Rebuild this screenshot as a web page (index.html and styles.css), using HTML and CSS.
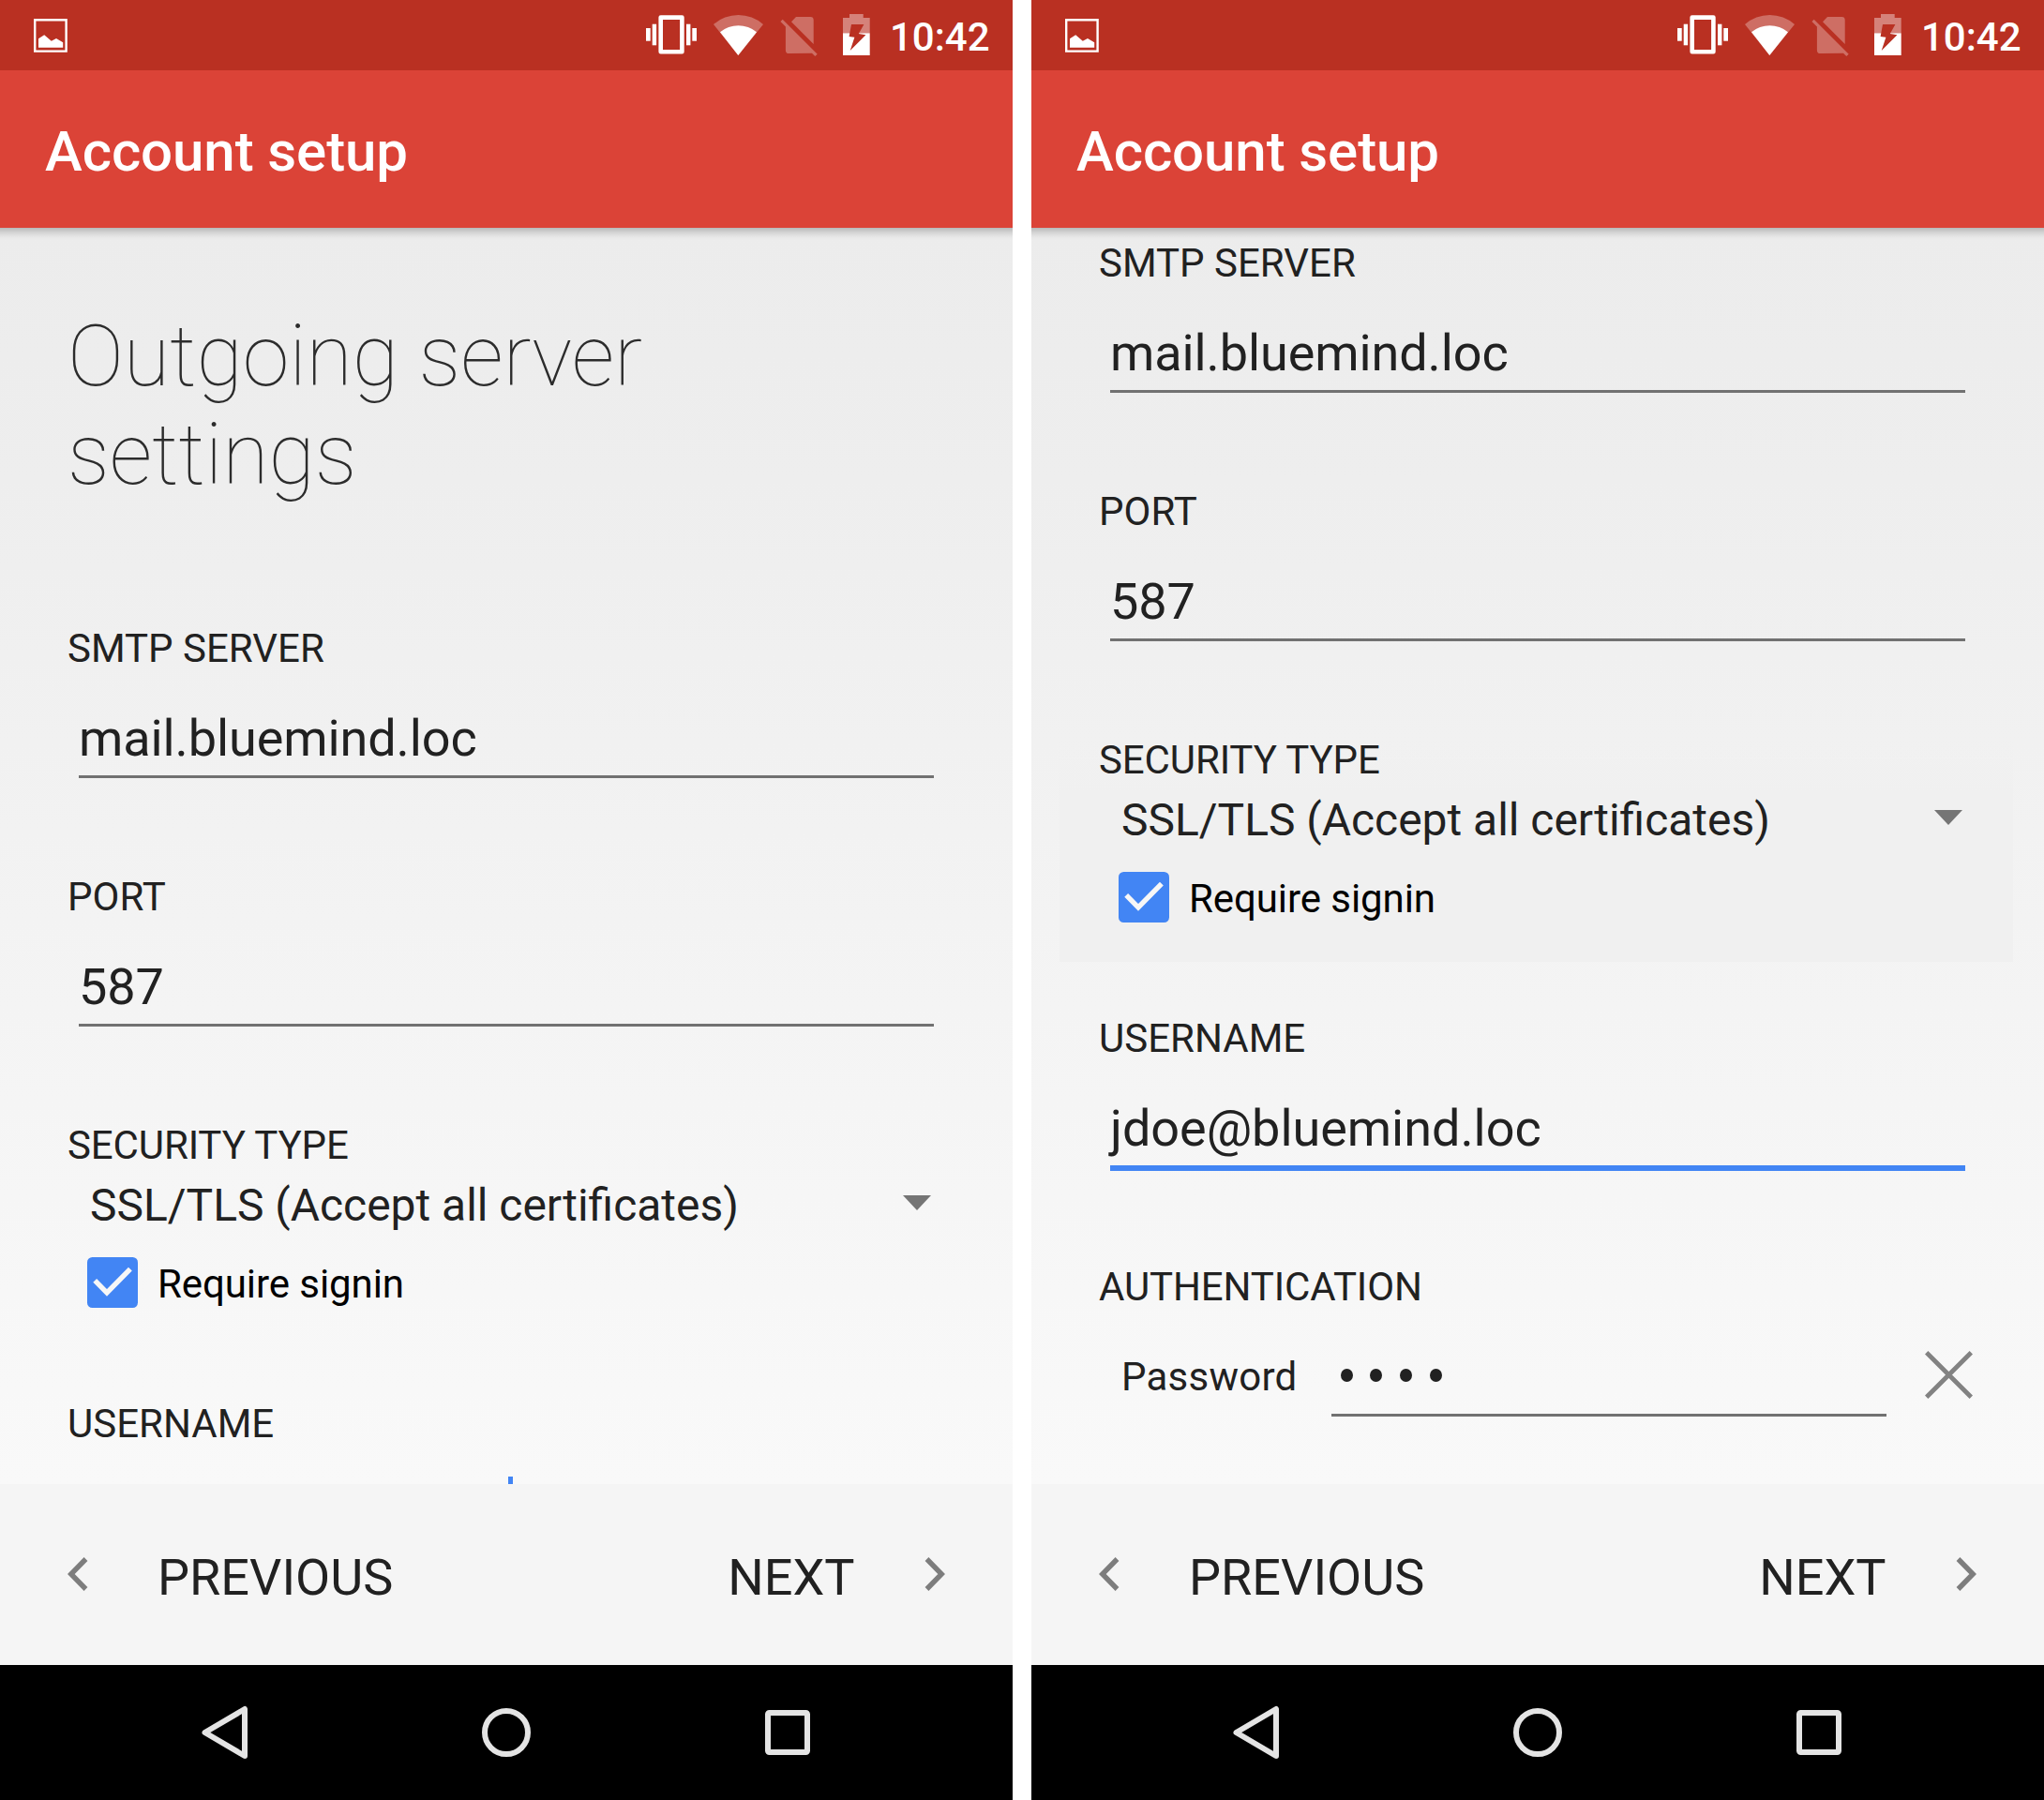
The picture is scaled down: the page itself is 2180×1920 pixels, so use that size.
FILE: index.html
```html
<!DOCTYPE html>
<html lang="en">
<head>
<meta charset="utf-8">
<title>Account setup</title>
<link rel="stylesheet" href="styles.css">
</head>
<body>
<svg class="defs" width="0" height="0" aria-hidden="true">
  <symbol id="i-status" viewBox="689 0 242 75">
    <g fill="#fff">
      <rect x="689" y="30" width="4.7" height="13.7"/>
      <rect x="695.7" y="25.7" width="4.4" height="22.6"/>
      <rect x="732" y="25.7" width="4.4" height="22.6"/>
      <rect x="738.3" y="30" width="4.7" height="13.7"/>
    </g>
    <path d="M704.7 18.6h22.7v36.6h-22.7z" fill="none" stroke="#fff" stroke-width="4.6" stroke-linejoin="round"/>
    <path d="M787.3 59 761 26A40 40 0 0 1 814 26z" fill="#fff" fill-opacity=".3"/>
    <path d="M787.3 59 768 34.3A30.6 30.6 0 0 1 807 34.3z" fill="#fff"/>
    <path d="M844 23.3l5-5.3h15.3a3.4 3.4 0 0 1 3.4 3.4V47zM834.7 20.7 837.7 23.7 871.7 57.7 869.3 60 866 56.7 841.5 57a3.6 3.6 0 0 1-3.6-3.6V28.5L832.4 23z" fill="#fff" fill-opacity=".3"/>
    <path d="M906 15h14.7v4h7v16.3h-28.7V19h7z" fill="#fff" fill-opacity=".4"/>
    <path d="M899 35.3h28.7V59H899z" fill="#fff"/>
    <path d="M908 26h13.4l-5.6 10 7.6 1.2L906.7 54l4.7-14.3-5.8-.6z" fill="#b93022"/>
  </symbol>
  <symbol id="i-image" viewBox="0 0 36 36">
    <path d="M1.2 1.2h33.4v33.4H1.2z" fill="none" stroke="#fff" stroke-width="2.4"/>
    <path d="M5 21.3 11.2 17.3 18.8 23.7 24 21 31.2 25.3V30.7H5z" fill="#fff"/>
  </symbol>
  <symbol id="i-check" viewBox="0 0 54 54">
    <rect width="54" height="54" rx="5.5" fill="#4285f4"/>
    <path d="M8.2 24.9 21 37.8 45.9 12.6" fill="none" stroke="#f7f7f7" stroke-width="5.4"/>
  </symbol>
  <symbol id="i-back" viewBox="0 0 60 60">
    <path d="M51 5v50L8.5 30z" fill="none" stroke="#e4e4e4" stroke-width="6" stroke-linejoin="round"/>
  </symbol>
  <symbol id="i-home" viewBox="0 0 60 60">
    <circle cx="30" cy="30" r="23" fill="none" stroke="#e4e4e4" stroke-width="6"/>
  </symbol>
  <symbol id="i-recent" viewBox="0 0 60 60">
    <rect x="9" y="9" width="42" height="42" rx="1.5" fill="none" stroke="#e4e4e4" stroke-width="6"/>
  </symbol>
  <symbol id="i-chevron" viewBox="0 0 22 36">
    <path d="M19.5 2 3.8 18 19.5 34" fill="none" stroke="#7d7d7d" stroke-width="5.4"/>
  </symbol>
</svg>

<div class="screens">
  <section class="phone">
    <div class="statusbar">
      <svg class="ico-image"><use href="#i-image"/></svg>
      <svg class="ico-status"><use href="#i-status"/></svg>
      <span class="clock">10:42</span>
    </div>
    <header class="appbar"><h1 class="title">Account setup</h1></header>
    <main class="content">
      <h2 class="heading">Outgoing server<br>settings</h2>
      <div class="field"><div class="label">SMTP SERVER</div><div class="input">mail.bluemind.loc</div></div>
      <div class="field"><div class="label">PORT</div><div class="input">587</div></div>
      <div class="security">
        <div class="label tight">SECURITY TYPE</div>
        <div class="select"><span>SSL/TLS (Accept all certificates)</span><i class="arrow"></i></div>
        <div class="checkrow"><svg class="checkbox"><use href="#i-check"/></svg><span>Require signin</span></div>
      </div>
      <div class="label">USERNAME</div>
      <div class="handle"></div>
    </main>
    <footer class="footer">
      <svg class="chevron"><use href="#i-chevron"/></svg>
      <span class="prev">PREVIOUS</span>
      <span class="next">NEXT</span>
      <svg class="chevron flip"><use href="#i-chevron"/></svg>
    </footer>
    <nav class="navbar">
      <svg class="navicon"><use href="#i-back"/></svg>
      <svg class="navicon"><use href="#i-home"/></svg>
      <svg class="navicon"><use href="#i-recent"/></svg>
    </nav>
  </section>

  <section class="phone">
    <div class="statusbar">
      <svg class="ico-image"><use href="#i-image"/></svg>
      <svg class="ico-status"><use href="#i-status"/></svg>
      <span class="clock">10:42</span>
    </div>
    <header class="appbar"><h1 class="title">Account setup</h1></header>
    <main class="content scrolled">
      <div class="field"><div class="label">SMTP SERVER</div><div class="input">mail.bluemind.loc</div></div>
      <div class="field"><div class="label">PORT</div><div class="input">587</div></div>
      <div class="security shaded">
        <div class="label tight">SECURITY TYPE</div>
        <div class="select"><span>SSL/TLS (Accept all certificates)</span><i class="arrow"></i></div>
        <div class="checkrow"><svg class="checkbox"><use href="#i-check"/></svg><span>Require signin</span></div>
      </div>
      <div class="field"><div class="label">USERNAME</div><div class="input focused">jdoe@bluemind.loc</div></div>
      <div class="label tight">AUTHENTICATION</div>
      <div class="auth">
        <span class="auth-label">Password</span>
        <div class="password"><i class="dot"></i><i class="dot"></i><i class="dot"></i><i class="dot"></i></div>
        <svg class="clear" viewBox="0 0 51 51"><path d="M1.7 1.7l47.6 47.6M49.3 1.7l-47.6 47.6" stroke="#828282" stroke-width="4.8"/></svg>
      </div>
    </main>
    <footer class="footer">
      <svg class="chevron"><use href="#i-chevron"/></svg>
      <span class="prev">PREVIOUS</span>
      <span class="next">NEXT</span>
      <svg class="chevron flip"><use href="#i-chevron"/></svg>
    </footer>
    <nav class="navbar">
      <svg class="navicon"><use href="#i-back"/></svg>
      <svg class="navicon"><use href="#i-home"/></svg>
      <svg class="navicon"><use href="#i-recent"/></svg>
    </nav>
  </section>
</div>
</body>
</html>
```

FILE: styles.css
```css
* { box-sizing: border-box; }
body {
  margin: 0;
  background: #fff;
  color: #212121;
  font-family: Roboto, "Liberation Sans", sans-serif;
}
svg { display: block; flex: none; }
.defs { position: absolute; }
.screens { display: flex; gap: 20px; width: 2180px; height: 1920px; }
.phone {
  width: 1080px;
  height: 1920px;
  display: flex;
  flex-direction: column;
  overflow: hidden;
}

/* status bar */
.statusbar {
  flex: none;
  height: 75px;
  padding: 0 25px 0 36px;
  background: #b93022;
  color: #fff;
  display: flex;
  align-items: center;
}
.ico-image { width: 36px; height: 36px; }
.ico-status { width: 242px; height: 75px; margin-left: auto; }
.clock {
  width: 106px;
  margin-left: 18px;
  padding-top: 4px;
  font-size: 42px;
  line-height: 50px;
  font-weight: 500;
}

/* app bar */
.appbar {
  flex: none;
  height: 168px;
  padding: 52px 48px 0;
  background: #db4337;
}
.title {
  margin: 0;
  color: #fff;
  font-size: 60px;
  line-height: 70px;
  font-weight: 500;
  letter-spacing: -.1px;
}

/* form */
.content {
  flex: none;
  height: 1340px;
  padding: 85px 72px 0;
  overflow: hidden;
  background:
    linear-gradient(rgba(0,0,0,.22), rgba(0,0,0,.1) 5px, rgba(0,0,0,.02) 10px, transparent 13px),
    linear-gradient(#ececec, #eee 20%, #f4f4f4 62%, #f9f9f9);
}
.content.scrolled { padding-top: 13px; }
.heading {
  margin: 0 0 129px;
  color: #2c2c2c;
  font-size: 90px;
  line-height: 105px;
  font-weight: 100;
  letter-spacing: -.08px;
}
.label { font-size: 42px; line-height: 50px; }
.tight { letter-spacing: -.12px; }
.field { margin-bottom: 102px; }
.input {
  margin: 39px 12px 0;
  padding-bottom: 7px;
  border-bottom: 3px solid #717171;
  font-size: 54px;
  line-height: 64px;
  letter-spacing: -.1px;
}
.input.focused {
  margin-bottom: -3px;
  border-bottom: 6px solid #4285f4;
  letter-spacing: -.04px;
}
.security { margin: 0 -42px 57px; padding: 0 42px 42px; }
.security.shaded {
  margin-right: -39px;
  padding-right: 39px;
  background: linear-gradient(transparent, #f0f0f0 60px);
}
.select {
  margin: 11px 15px 0 24px;
  display: flex;
  align-items: center;
  justify-content: space-between;
  font-size: 47.95px;
  line-height: 56px;
}
.arrow {
  margin-bottom: 6px;
  border: 15px solid transparent;
  border-top: 16px solid #757575;
  border-bottom: 0;
}
.checkrow {
  margin: 27px 0 0 21px;
  height: 54px;
  display: flex;
  align-items: flex-end;
  gap: 21px;
  color: #000;
  font-size: 42px;
  line-height: 50px;
  letter-spacing: -.08px;
}
.checkbox { width: 54px; height: 54px; }
.handle { width: 5px; height: 8px; margin: 31px 0 0 470px; background: #4285f4; }

.auth { display: flex; margin: 43px 4px 0 24px; height: 70px; }
.auth-label {
  width: 224px;
  padding-top: 3px;
  font-size: 42px;
  line-height: 50px;
  letter-spacing: .25px;
}
.password {
  width: 592px;
  padding: 0 0 16px 9.5px;
  border-bottom: 3px solid #717171;
  display: flex;
  align-items: center;
  gap: 18.7px;
}
.dot { width: 13px; height: 14px; border-radius: 50%; background: #212121; }
.clear { width: 51px; height: 51px; margin-left: auto; }

/* wizard buttons */
.footer {
  flex: none;
  height: 193px;
  padding: 0 72px;
  background: #f5f5f5;
  display: flex;
  align-items: center;
  font-size: 54px;
  line-height: 64px;
}
.chevron { width: 22px; height: 36px; margin-top: -1px; }
.flip { transform: scaleX(-1); margin-left: 74.5px; }
.prev { margin-left: 74px; padding-top: 7px; }
.next { margin-left: auto; padding-top: 7px; }

/* system navigation */
.navbar {
  flex: none;
  height: 144px;
  background: #000;
  display: flex;
  align-items: center;
  justify-content: center;
  gap: 240px;
}
.navicon { width: 60px; height: 60px; }
```
